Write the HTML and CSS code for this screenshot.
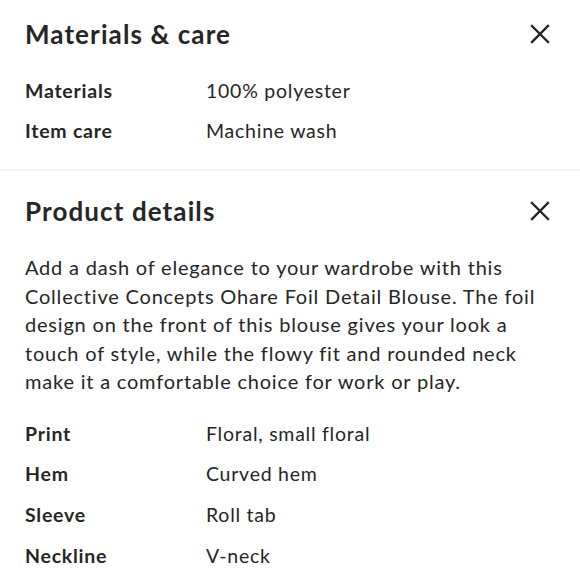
FILE: index.html
```html
<!DOCTYPE html>
<html>
<head>
<meta charset="utf-8">
<link rel="stylesheet" href="styles.css">
</head>
<body>
<section class="panel panel-first">
  <div class="panel-head">
    <h2 class="panel-title">Materials &amp; care</h2>
    <svg class="close" viewBox="0 0 20 20" width="20" height="20"><path d="M2 2 L18 18 M18 2 L2 18" stroke="#222" stroke-width="2.3" stroke-linecap="square" fill="none"/></svg>
  </div>
  <dl class="specs">
    <div class="spec"><dt>Materials</dt><dd>100% polyester</dd></div>
    <div class="spec"><dt>Item care</dt><dd>Machine wash</dd></div>
  </dl>
</section>
<section class="panel panel-second">
  <div class="panel-head">
    <h2 class="panel-title">Product details</h2>
    <svg class="close" viewBox="0 0 20 20" width="20" height="20"><path d="M2 2 L18 18 M18 2 L2 18" stroke="#222" stroke-width="2.3" stroke-linecap="square" fill="none"/></svg>
  </div>
  <p class="desc">Add a dash of elegance to your wardrobe with this Collective Concepts Ohare Foil Detail Blouse. The foil design on the front of this blouse gives your look a touch of style, while the flowy fit and rounded neck make it a comfortable choice for work or play.</p>
  <dl class="specs specs-details">
    <div class="spec"><dt>Print</dt><dd>Floral, small floral</dd></div>
    <div class="spec"><dt>Hem</dt><dd>Curved hem</dd></div>
    <div class="spec"><dt>Sleeve</dt><dd>Roll tab</dd></div>
    <div class="spec"><dt>Neckline</dt><dd>V-neck</dd></div>
  </dl>
</section>
</body>
</html>
```
FILE: styles.css
```css
html, body {
  margin: 0;
  padding: 0;
  background: #ffffff;
}
body {
  font-family: Lato, "Noto Sans", sans-serif;
  color: #262626;
  width: 580px;
  overflow: hidden;
}
.panel {
  padding: 0 25px;
}
.panel-first {
  padding-top: 18px;
  padding-bottom: 19px;
  border-bottom: 2px solid #f2f2f2;
}
.panel-second {
  padding-top: 24px;
}
.panel-head {
  display: flex;
  align-items: center;
  justify-content: space-between;
  height: 32px;
}
.panel-title {
  margin: 0;
  font-size: 26px;
  font-weight: 700;
  line-height: 32px;
  letter-spacing: 1.1px;
  color: #262626;
}
.close {
  display: block;
  margin-right: 5px;
}
.specs {
  margin: 20px 0 0;
  padding: 0;
}
.spec {
  display: flex;
  height: 40px;
  align-items: center;
  font-size: 19.5px;
  letter-spacing: 0.75px;
}
.spec dt {
  width: 181px;
  font-weight: 700;
}
.spec dd {
  margin: 0;
}
.desc {
  margin: 26px 0 0;
  font-size: 20px;
  line-height: 28.6px;
  letter-spacing: 0.8px;
}
.specs-details {
  margin-top: 17px;
}
.specs-details .spec {
  height: 40.6px;
}
```
